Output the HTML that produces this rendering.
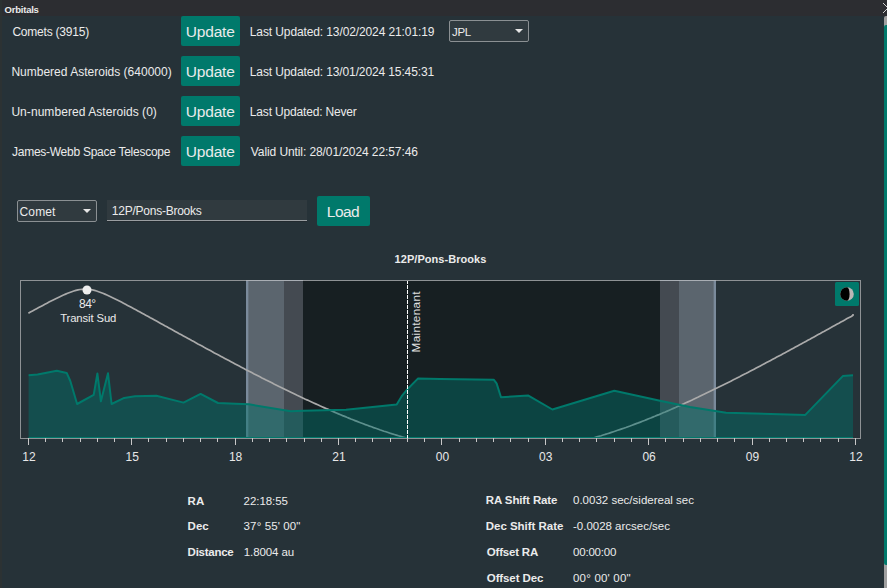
<!DOCTYPE html>
<html><head><meta charset="utf-8">
<style>
html,body{margin:0;padding:0;width:887px;height:588px;overflow:hidden;background:#263238;}
body{position:relative;font-family:"Liberation Sans",sans-serif;color:#ebebeb;}
.a{position:absolute;white-space:nowrap;line-height:normal;}
.btn{background:#00796b;border-radius:2px;}
.box{border:1px solid #8b9093;border-radius:2px;background:#303a3f;box-sizing:border-box;}
.tri{width:0;height:0;border-left:4px solid transparent;border-right:4px solid transparent;border-top:4px solid #e6e6e6;}
</style></head><body>
<div class="a" style="left:0;top:0;width:2px;height:588px;background:#2c3233"></div>
<div class="a" style="left:2px;top:0;width:885px;height:16px;background:#2c2d31"></div>
<svg class="a" style="left:880px;top:0px" width="7" height="16"><path d="M3 3 L13 13 M3 13 L13 3" stroke="#d0d0d0" stroke-width="1"/></svg>
<div class="a" style="left:884px;top:16px;width:3px;height:572px;background:#a0a0a0;border-radius:2px 0 0 0"></div>
<div class="a" style="left:884px;top:25px;width:3px;height:540px;background:#00796b;border-radius:2px 0 0 2px"></div>

<div class="a btn" style="left:181px;top:16px;width:59px;height:30px"></div>
<div class="a btn" style="left:181px;top:56px;width:59px;height:30px"></div>
<div class="a btn" style="left:181px;top:96px;width:59px;height:30px"></div>
<div class="a btn" style="left:181px;top:136px;width:59px;height:30px"></div>

<div class="a box" style="left:449px;top:20px;width:80px;height:22px"></div>
<div class="a tri" style="left:515px;top:29px"></div>

<div class="a box" style="left:17px;top:200px;width:80px;height:22px"></div>
<div class="a tri" style="left:83px;top:209px"></div>

<div class="a" style="left:107px;top:200px;width:200px;height:21px;background:#303a3f;border-bottom:1px solid #9a9ea1;box-sizing:border-box"></div>
<div class="a" style="left:107px;top:221px;width:200px;height:1px;background:#222a2f"></div>
<div class="a btn" style="left:317px;top:196px;width:53px;height:30px"></div>

<svg class="a" style="left:0;top:0" width="887" height="588">
<defs><clipPath id="pc"><rect x="21" y="281" width="839" height="157"/></clipPath></defs>
<g clip-path="url(#pc)">
<rect x="303" y="281" width="357" height="157" fill="#171f22"/>
<rect x="284" y="281" width="19" height="157" fill="#444a51"/>
<rect x="660" y="281" width="19" height="157" fill="#444a51"/>
<rect x="246" y="281" width="38" height="157" fill="#5b656e"/>
<rect x="679" y="281" width="37" height="157" fill="#5b656e"/>
<rect x="246" y="281" width="2" height="157" fill="#7a8a9b"/>
<rect x="248" y="281" width="1" height="157" fill="#66727d"/>
<rect x="714" y="281" width="2" height="157" fill="#7a8a9b"/>
<rect x="713" y="281" width="1" height="157" fill="#66727d"/>
<path d="M28.4 313.2 L30.4 312.0 L32.5 310.9 L34.6 309.8 L36.6 308.7 L38.7 307.6 L40.8 306.5 L42.8 305.4 L44.9 304.3 L47.0 303.2 L49.0 302.1 L51.1 301.0 L53.2 300.0 L55.2 299.0 L57.3 298.0 L59.4 297.0 L61.4 296.0 L63.5 295.0 L65.6 294.1 L67.6 293.3 L69.7 292.5 L71.8 291.7 L73.8 291.0 L75.9 290.4 L78.0 289.9 L80.0 289.5 L82.1 289.3 L84.2 289.1 L86.2 289.1 L88.3 289.3 L90.4 289.5 L92.4 289.9 L94.5 290.4 L96.6 291.0 L98.6 291.7 L100.7 292.5 L102.8 293.3 L104.9 294.1 L106.9 295.0 L109.0 296.0 L111.1 297.0 L113.1 298.0 L115.2 299.0 L117.3 300.0 L119.3 301.0 L121.4 302.1 L123.5 303.2 L125.5 304.3 L127.6 305.4 L129.7 306.5 L131.7 307.6 L133.8 308.7 L135.9 309.8 L137.9 310.9 L140.0 312.0 L142.1 313.2 L144.1 314.3 L146.2 315.4 L148.3 316.5 L150.3 317.7 L152.4 318.8 L154.5 320.0 L156.5 321.1 L158.6 322.2 L160.7 323.4 L162.7 324.5 L164.8 325.7 L166.9 326.8 L168.9 327.9 L171.0 329.1 L173.1 330.2 L175.2 331.4 L177.2 332.5 L179.3 333.7 L181.4 334.8 L183.4 335.9 L185.5 337.1 L187.6 338.2 L189.6 339.3 L191.7 340.5 L193.8 341.6 L195.8 342.7 L197.9 343.9 L200.0 345.0 L202.0 346.1 L204.1 347.3 L206.2 348.4 L208.2 349.5 L210.3 350.6 L212.4 351.7 L214.4 352.9 L216.5 354.0 L218.6 355.1 L220.6 356.2 L222.7 357.3 L224.8 358.4 L226.8 359.5 L228.9 360.6 L231.0 361.7 L233.0 362.8 L235.1 363.9 L237.2 365.0 L239.2 366.1 L241.3 367.2 L243.4 368.3 L245.5 369.4 L247.5 370.4 L249.6 371.5 L251.7 372.6 L253.7 373.7 L255.8 374.7 L257.9 375.8 L259.9 376.8 L262.0 377.9 L264.1 378.9 L266.1 380.0 L268.2 381.0 L270.3 382.1 L272.3 383.1 L274.4 384.2 L276.5 385.2 L278.5 386.2 L280.6 387.2 L282.7 388.3 L284.7 389.3 L286.8 390.3 L288.9 391.3 L290.9 392.3 L293.0 393.3 L295.1 394.3 L297.1 395.3 L299.2 396.2 L301.3 397.2 L303.3 398.2 L305.4 399.2 L307.5 400.1 L309.5 401.1 L311.6 402.0 L313.7 403.0 L315.7 403.9 L317.8 404.8 L319.9 405.8 L322.0 406.7 L324.0 407.6 L326.1 408.5 L328.2 409.4 L330.2 410.3 L332.3 411.2 L334.4 412.1 L336.4 413.0 L338.5 413.9 L340.6 414.7 L342.6 415.6 L344.7 416.4 L346.8 417.3 L348.8 418.1 L350.9 419.0 L353.0 419.8 L355.0 420.6 L357.1 421.4 L359.2 422.2 L361.2 423.0 L363.3 423.8 L365.4 424.6 L367.4 425.3 L369.5 426.1 L371.6 426.8 L373.6 427.6 L375.7 428.3 L377.8 429.0 L379.8 429.8 L381.9 430.5 L384.0 431.2 L386.0 431.8 L388.1 432.5 L390.2 433.2 L392.3 433.9 L394.3 434.5 L396.4 435.1 L398.5 435.8 L400.5 436.4 L402.6 437.0 L404.7 437.6 L406.7 438.2 L408.8 438.8 L410.9 439.3 L412.9 439.9 L415.0 440.4 L417.1 441.0 L419.1 441.5 L421.2 442.0 L423.3 442.5 L425.3 443.0 L427.4 443.5 L429.5 443.9 L431.5 444.4 L433.6 444.8 L435.7 445.3 L437.7 445.7 L439.8 446.1 L441.9 446.5 L443.9 446.8 L446.0 447.2 L448.1 447.5 L450.1 447.9 L452.2 448.2 L454.3 448.5 L456.3 448.8 L458.4 449.1 L460.5 449.4 L462.6 449.6 L464.6 449.9 L466.7 450.1 L468.8 450.3 L470.8 450.5 L472.9 450.7 L475.0 450.9 L477.0 451.1 L479.1 451.2 L481.2 451.3 L483.2 451.5 L485.3 451.6 L487.4 451.7 L489.4 451.7 L491.5 451.8 L493.6 451.9 L495.6 451.9 L497.7 451.9 L499.8 451.9 L501.8 451.9 L503.9 451.9 L506.0 451.8 L508.0 451.8 L510.1 451.7 L512.2 451.6 L514.2 451.6 L516.3 451.4 L518.4 451.3 L520.4 451.2 L522.5 451.0 L524.6 450.9 L526.6 450.7 L528.7 450.5 L530.8 450.3 L532.9 450.1 L534.9 449.8 L537.0 449.6 L539.1 449.3 L541.1 449.1 L543.2 448.8 L545.3 448.5 L547.3 448.2 L549.4 447.8 L551.5 447.5 L553.5 447.1 L555.6 446.8 L557.7 446.4 L559.7 446.0 L561.8 445.6 L563.9 445.2 L565.9 444.8 L568.0 444.3 L570.1 443.9 L572.1 443.4 L574.2 442.9 L576.3 442.4 L578.3 441.9 L580.4 441.4 L582.5 440.9 L584.5 440.3 L586.6 439.8 L588.7 439.2 L590.7 438.7 L592.8 438.1 L594.9 437.5 L596.9 436.9 L599.0 436.3 L601.1 435.7 L603.1 435.0 L605.2 434.4 L607.3 433.7 L609.4 433.1 L611.4 432.4 L613.5 431.7 L615.6 431.0 L617.6 430.3 L619.7 429.6 L621.8 428.9 L623.8 428.2 L625.9 427.5 L628.0 426.7 L630.0 426.0 L632.1 425.2 L634.2 424.4 L636.2 423.6 L638.3 422.9 L640.4 422.1 L642.4 421.3 L644.5 420.5 L646.6 419.6 L648.6 418.8 L650.7 418.0 L652.8 417.1 L654.8 416.3 L656.9 415.4 L659.0 414.6 L661.0 413.7 L663.1 412.8 L665.2 412.0 L667.2 411.1 L669.3 410.2 L671.4 409.3 L673.4 408.4 L675.5 407.5 L677.6 406.5 L679.7 405.6 L681.7 404.7 L683.8 403.8 L685.9 402.8 L687.9 401.9 L690.0 400.9 L692.1 400.0 L694.1 399.0 L696.2 398.0 L698.3 397.1 L700.3 396.1 L702.4 395.1 L704.5 394.1 L706.5 393.1 L708.6 392.1 L710.7 391.1 L712.7 390.1 L714.8 389.1 L716.9 388.1 L718.9 387.1 L721.0 386.0 L723.1 385.0 L725.1 384.0 L727.2 382.9 L729.3 381.9 L731.3 380.9 L733.4 379.8 L735.5 378.8 L737.5 377.7 L739.6 376.7 L741.7 375.6 L743.7 374.5 L745.8 373.5 L747.9 372.4 L750.0 371.3 L752.0 370.3 L754.1 369.2 L756.2 368.1 L758.2 367.0 L760.3 365.9 L762.4 364.8 L764.4 363.7 L766.5 362.6 L768.6 361.5 L770.6 360.4 L772.7 359.3 L774.8 358.2 L776.8 357.1 L778.9 356.0 L781.0 354.9 L783.0 353.8 L785.1 352.7 L787.2 351.6 L789.2 350.4 L791.3 349.3 L793.4 348.2 L795.4 347.1 L797.5 345.9 L799.6 344.8 L801.6 343.7 L803.7 342.6 L805.8 341.4 L807.8 340.3 L809.9 339.2 L812.0 338.0 L814.0 336.9 L816.1 335.7 L818.2 334.6 L820.3 333.5 L822.3 332.3 L824.4 331.2 L826.5 330.0 L828.5 328.9 L830.6 327.8 L832.7 326.6 L834.7 325.5 L836.8 324.3 L838.9 323.2 L840.9 322.0 L843.0 320.9 L845.1 319.8 L847.1 318.6 L849.2 317.5 L851.3 316.4 L853.0 315.2 L853.0 314.1" fill="none" stroke="#aaaaaa" stroke-width="1.7"/>
<path d="M28.6 375.2 L37.6 374.5 L56.8 370.8 L66.7 372.9 L70.3 381.0 L77.1 404.0 L93.7 394.9 L97.4 373.5 L100.9 401.3 L108.0 373.3 L111.6 404.0 L124.2 397.9 L135.0 396.3 L156.4 395.8 L183.5 402.6 L200.6 393.9 L218.0 403.0 L235.5 403.8 L249.0 404.3 L290.7 411.3 L303.1 410.8 L346.0 409.7 L396.7 404.5 L402.3 395.3 L406.9 389.8 L418.1 378.4 L440.0 379.0 L493.7 379.7 L496.6 383.4 L501.0 397.3 L528.4 395.6 L552.4 409.5 L614.3 390.8 L660.0 400.8 L690.0 407.0 L726.1 412.8 L805.3 414.9 L842.8 376.1 L853.0 375.3 L853 437.5 L28.6 437.5 Z" fill="#00706a" fill-opacity="0.45"/>
<path d="M28.6 375.2 L37.6 374.5 L56.8 370.8 L66.7 372.9 L70.3 381.0 L77.1 404.0 L93.7 394.9 L97.4 373.5 L100.9 401.3 L108.0 373.3 L111.6 404.0 L124.2 397.9 L135.0 396.3 L156.4 395.8 L183.5 402.6 L200.6 393.9 L218.0 403.0 L235.5 403.8 L249.0 404.3 L290.7 411.3 L303.1 410.8 L346.0 409.7 L396.7 404.5 L402.3 395.3 L406.9 389.8 L418.1 378.4 L440.0 379.0 L493.7 379.7 L496.6 383.4 L501.0 397.3 L528.4 395.6 L552.4 409.5 L614.3 390.8 L660.0 400.8 L690.0 407.0 L726.1 412.8 L805.3 414.9 L842.8 376.1 L853.0 375.3" fill="none" stroke="#00796b" stroke-width="2" stroke-linejoin="round"/>
<path d="M28.6 437.5 L853 437.5" stroke="#00796b" stroke-width="1"/>
<line x1="407.5" y1="280" x2="407.5" y2="438" stroke="#ffffff" stroke-width="1" stroke-dasharray="4 1"/>
</g>
<rect x="20.5" y="280.5" width="840" height="158" fill="none" stroke="#8e9295" stroke-width="1"/>
<path d="M246 280.5 L303 280.5 M660 280.5 L716 280.5" stroke="#a9aeb4" stroke-width="1"/>
<path d="M28.5 438 L28.5 445 M45.5 438 L45.5 442 M62.5 438 L62.5 442 M80.5 438 L80.5 442 M97.5 438 L97.5 442 M114.5 438 L114.5 442 M131.5 438 L131.5 445 M148.5 438 L148.5 442 M166.5 438 L166.5 442 M183.5 438 L183.5 442 M200.5 438 L200.5 442 M217.5 438 L217.5 442 M235.5 438 L235.5 445 M252.5 438 L252.5 442 M269.5 438 L269.5 442 M286.5 438 L286.5 442 M304.5 438 L304.5 442 M321.5 438 L321.5 442 M338.5 438 L338.5 445 M355.5 438 L355.5 442 M372.5 438 L372.5 442 M390.5 438 L390.5 442 M407.5 438 L407.5 442 M424.5 438 L424.5 442 M441.5 438 L441.5 445 M459.5 438 L459.5 442 M476.5 438 L476.5 442 M493.5 438 L493.5 442 M510.5 438 L510.5 442 M528.5 438 L528.5 442 M545.5 438 L545.5 445 M562.5 438 L562.5 442 M579.5 438 L579.5 442 M596.5 438 L596.5 442 M614.5 438 L614.5 442 M631.5 438 L631.5 442 M648.5 438 L648.5 445 M665.5 438 L665.5 442 M683.5 438 L683.5 442 M700.5 438 L700.5 442 M717.5 438 L717.5 442 M734.5 438 L734.5 442 M752.5 438 L752.5 445 M769.5 438 L769.5 442 M786.5 438 L786.5 442 M803.5 438 L803.5 442 M820.5 438 L820.5 442 M838.5 438 L838.5 442 M855.5 438 L855.5 445" stroke="#c8c8c8" stroke-width="1"/>
<g font-family="Liberation Sans" font-size="12" fill="#e8e8e8"><text x="28.9" y="461" text-anchor="middle">12</text><text x="132.2" y="461" text-anchor="middle">15</text><text x="235.6" y="461" text-anchor="middle">18</text><text x="339.0" y="461" text-anchor="middle">21</text><text x="442.4" y="461" text-anchor="middle">00</text><text x="545.8" y="461" text-anchor="middle">03</text><text x="649.1" y="461" text-anchor="middle">06</text><text x="752.5" y="461" text-anchor="middle">09</text><text x="855.9" y="461" text-anchor="middle">12</text></g>
<circle cx="87" cy="290" r="4.5" fill="#eeeeee"/>
<text transform="translate(420 352.5) rotate(-90)" font-family="Liberation Sans" font-size="11.8" letter-spacing="0.3" fill="#e0e0e0">Maintenant</text>
<rect x="835" y="282" width="24" height="24" rx="1.5" fill="#00796b"/>
<circle cx="847" cy="294" r="6.8" fill="#bcb6b6"/>
<path d="M847 287.2 A6.8 6.8 0 0 0 847 300.8 A2.6 6.8 0 0 0 847 287.2 Z" fill="#000000"/>
</svg>
<div class="a" id="orb" style="left:4.6px;top:3.6px;font-size:9.5px;letter-spacing:-0.228px;font-weight:bold;">Orbitals</div>
<div class="a" id="c1" style="left:12.4px;top:25.4px;font-size:12px;letter-spacing:-0.217px;">Comets (3915)</div>
<div class="a" id="c2" style="left:11.4px;top:64.8px;font-size:12px;letter-spacing:0.008px;">Numbered Asteroids (640000)</div>
<div class="a" id="c3" style="left:11.4px;top:105.4px;font-size:12px;letter-spacing:0.059px;">Un-numbered Asteroids (0)</div>
<div class="a" id="c4" style="left:12.0px;top:145px;font-size:12px;letter-spacing:-0.264px;">James-Webb Space Telescope</div>
<div class="a" id="u1" style="left:185.8px;top:23px;font-size:15.5px;letter-spacing:-0.200px;">Update</div>
<div class="a" id="u2" style="left:185.8px;top:63px;font-size:15.5px;letter-spacing:-0.200px;">Update</div>
<div class="a" id="u3" style="left:185.8px;top:103px;font-size:15.5px;letter-spacing:-0.200px;">Update</div>
<div class="a" id="u4" style="left:185.8px;top:143px;font-size:15.5px;letter-spacing:-0.200px;">Update</div>
<div class="a" id="l1" style="left:249.8px;top:25.2px;font-size:12px;letter-spacing:-0.111px;">Last Updated: 13/02/2024 21:01:19</div>
<div class="a" id="l2" style="left:249.8px;top:65.2px;font-size:12px;letter-spacing:-0.118px;">Last Updated: 13/01/2024 15:45:31</div>
<div class="a" id="l3" style="left:249.8px;top:105.2px;font-size:12px;letter-spacing:-0.167px;">Last Updated: Never</div>
<div class="a" id="l4" style="left:250.8px;top:145.2px;font-size:12px;letter-spacing:-0.090px;">Valid Until: 28/01/2024 22:57:46</div>
<div class="a" id="jpl" style="left:452px;top:26px;font-size:11.5px;letter-spacing:-0.300px;">JPL</div>
<div class="a" id="comet" style="left:19.6px;top:205.2px;font-size:12px;letter-spacing:0.100px;">Comet</div>
<div class="a" id="inp" style="left:111.8px;top:204.4px;font-size:12px;letter-spacing:-0.243px;">12P/Pons-Brooks</div>
<div class="a" id="load" style="left:326.8px;top:203px;font-size:15.5px;letter-spacing:-0.533px;">Load</div>
<div class="a" id="title" style="left:394.6px;top:253.4px;font-size:11px;letter-spacing:0.043px;font-weight:bold;">12P/Pons-Brooks</div>
<div class="a" id="ra" style="left:187.6px;top:495.2px;font-size:11.5px;letter-spacing:0.000px;font-weight:bold;">RA</div>
<div class="a" id="rav" style="left:243.6px;top:495.2px;font-size:11.5px;letter-spacing:-0.058px;">22:18:55</div>
<div class="a" id="dec" style="left:187.6px;top:520.4px;font-size:11.5px;letter-spacing:0.000px;font-weight:bold;">Dec</div>
<div class="a" id="decv" style="left:243.6px;top:520.4px;font-size:11.5px;letter-spacing:0.120px;">37° 55' 00&quot;</div>
<div class="a" id="dist" style="left:187.6px;top:546.4px;font-size:11.5px;letter-spacing:-0.257px;font-weight:bold;">Distance</div>
<div class="a" id="distv" style="left:243.8px;top:546.4px;font-size:11.5px;letter-spacing:-0.098px;">1.8004 au</div>
<div class="a" id="ras" style="left:485.8px;top:493.8px;font-size:11.5px;letter-spacing:-0.116px;font-weight:bold;">RA Shift Rate</div>
<div class="a" id="rasv" style="left:573.0px;top:493.8px;font-size:11.5px;letter-spacing:0.009px;">0.0032 sec/sidereal sec</div>
<div class="a" id="decs" style="left:485.8px;top:519.8px;font-size:11.5px;letter-spacing:-0.032px;font-weight:bold;">Dec Shift Rate</div>
<div class="a" id="decsv" style="left:573.0px;top:519.8px;font-size:11.5px;letter-spacing:-0.011px;">-0.0028 arcsec/sec</div>
<div class="a" id="offra" style="left:486.8px;top:545.8px;font-size:11.5px;letter-spacing:-0.202px;font-weight:bold;">Offset RA</div>
<div class="a" id="offrav" style="left:573.0px;top:545.8px;font-size:11.5px;letter-spacing:-0.199px;">00:00:00</div>
<div class="a" id="offdec" style="left:486.8px;top:572.2px;font-size:11.5px;letter-spacing:-0.112px;font-weight:bold;">Offset Dec</div>
<div class="a" id="offdecv" style="left:573.0px;top:572.2px;font-size:11.5px;letter-spacing:0.200px;">00° 00' 00&quot;</div>
<div class="a" id="deg" style="left:79px;top:297.4px;font-size:12px;letter-spacing:-0.500px;">84°</div>
<div class="a" id="transit" style="left:60.2px;top:312px;font-size:11.3px;letter-spacing:-0.120px;">Transit Sud</div>

</body></html>
